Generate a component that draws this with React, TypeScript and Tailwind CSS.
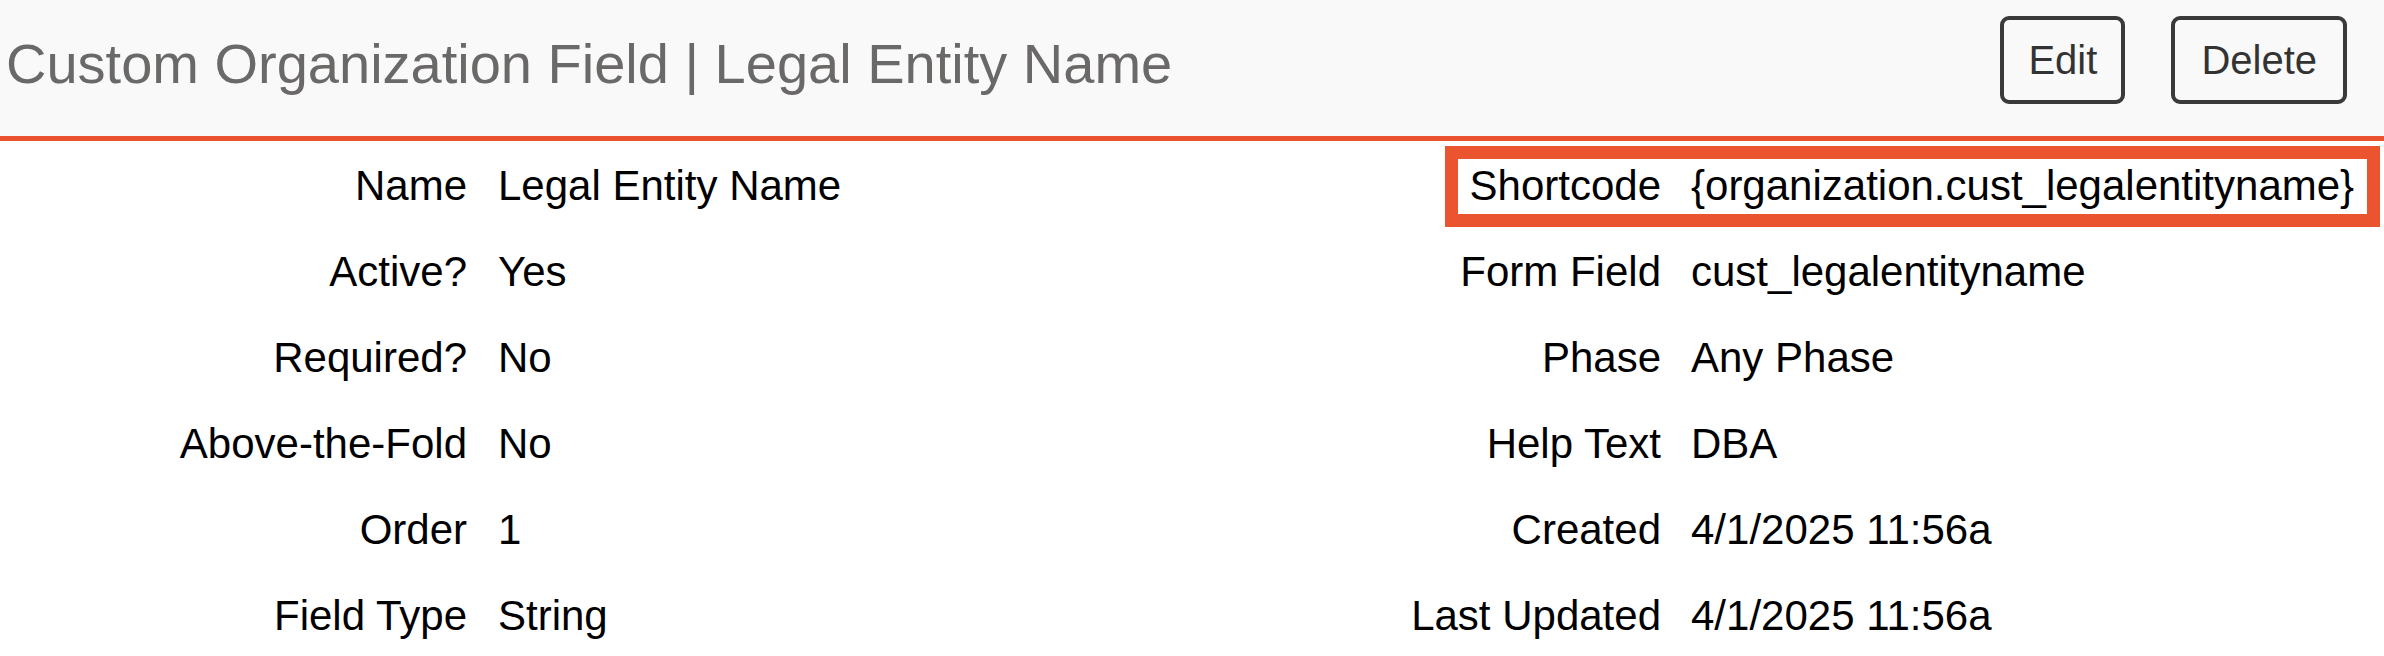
const leftRows: [string, string][] = [
  ["Name", "Legal Entity Name"],
  ["Active?", "Yes"],
  ["Required?", "No"],
  ["Above-the-Fold", "No"],
  ["Order", "1"],
  ["Field Type", "String"],
];

const rightRows: [string, string][] = [
  ["Shortcode", "{organization.cust_legalentityname}"],
  ["Form Field", "cust_legalentityname"],
  ["Phase", "Any Phase"],
  ["Help Text", "DBA"],
  ["Created", "4/1/2025 11:56a"],
  ["Last Updated", "4/1/2025 11:56a"],
];

export default function App() {
  return (
    <div
      className="w-[2384px] h-[656px] bg-white overflow-hidden text-black"
      style={{ fontFamily: '"Liberation Sans", Arial, sans-serif' }}
    >
      {/* Header */}
      <div className="flex items-start justify-between h-[141px] bg-[#f9f9f9] border-b-[5px] border-[#e9532f]">
        <h1 className="pl-[6px] pt-[36px] text-[56px] leading-[56px] text-[#6b6868] font-normal whitespace-nowrap">
          Custom Organization Field | Legal Entity Name
        </h1>
        <div className="flex gap-[46px] pt-[16px] pr-[37px]">
          <button className="h-[88px] px-[24px] border-[4px] border-[#3a3a3a] rounded-[9px] text-[40px] leading-none text-[#333]">
            Edit
          </button>
          <button className="h-[88px] px-[26px] border-[4px] border-[#3a3a3a] rounded-[9px] text-[40px] leading-none text-[#333]">
            Delete
          </button>
        </div>
      </div>

      {/* Details */}
      <div className="relative pt-[2px]">
        <div className="grid grid-cols-[467px_727px_467px_1fr] text-[42px] leading-[86px] whitespace-nowrap">
          {leftRows.map((row, i) => (
            <div key={row[0]} className="contents">
              <div className="text-right">{row[0]}</div>
              <div className="pl-[31px]">{row[1]}</div>
              <div className="text-right">{rightRows[i][0]}</div>
              <div className="pl-[30px]">{rightRows[i][1]}</div>
            </div>
          ))}
        </div>

        {/* highlight annotation around the shortcode */}
        <div className="absolute left-[1445px] top-[5px] w-[935px] h-[81px] border-[13px] border-[#ea5530] pointer-events-none" />
      </div>
    </div>
  );
}
